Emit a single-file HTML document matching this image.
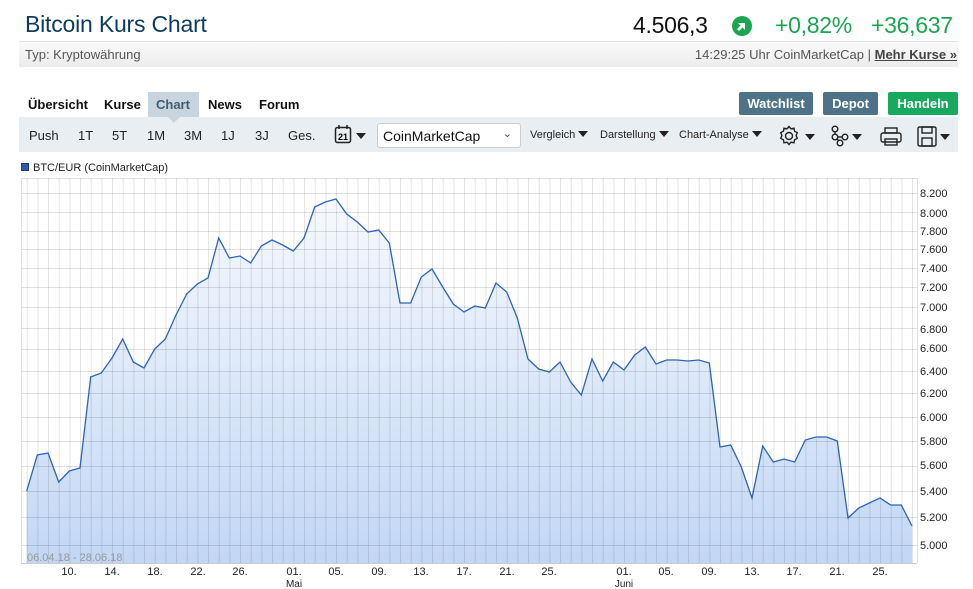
<!DOCTYPE html>
<html><head><meta charset="utf-8">
<style>
*{margin:0;padding:0;box-sizing:border-box}
body{width:973px;height:589px;background:#fff;font-family:"Liberation Sans",sans-serif;position:relative;overflow:hidden}
.a{position:absolute;white-space:nowrap}
.title{left:25px;top:11px;font-size:23px;color:#0d3b5e;letter-spacing:-0.2px}
.bar{left:19px;top:41px;width:939px;height:26px;background:linear-gradient(#fafafa,#ececec);border-top:1px solid #e2e2e2}
.typ{left:25px;top:47px;font-size:13px;color:#555}
.time{right:16px;top:47px;font-size:13px;color:#555}
.time b{color:#444;text-decoration:underline}
.price{left:633px;top:12px;font-size:23px;color:#111;letter-spacing:-0.3px}
.green{color:#1ba550;font-size:23px;top:12px;letter-spacing:-0.3px}
.tab{top:97px;font-size:13px;font-weight:bold;color:#111}
.ctab{left:148px;top:92px;width:51px;height:25px;background:#c9d5de}
.btn{top:92px;height:23px;border-radius:2px;color:#fff;font-size:13px;font-weight:bold;text-align:center;line-height:23px}
.tool{left:19px;top:117px;width:939px;height:35px;background:#e9eef2}
.t{top:128px;font-size:13px;color:#222}
.s{top:129px;font-size:11px;color:#222}
.sel{left:377px;top:123px;width:144px;height:25px;background:#fff;border:1px solid #ccc;border-radius:3px;font-size:14px;padding:4px 5px;color:#111}
.tri{display:inline-block;width:0;height:0;border-left:5px solid transparent;border-right:5px solid transparent;border-top:6px solid #222;margin-left:3px;vertical-align:1px}
.lab{font-size:11px;color:#222;font-family:"Liberation Sans",Arial,sans-serif}
</style></head><body>
<div class="a title">Bitcoin Kurs Chart</div>
<div class="a price">4.506,3</div>
<svg class="a" style="left:731px;top:15px" width="22" height="22" viewBox="0 0 22 22"><circle cx="11" cy="11" r="10" fill="#1ba550"/><path d="M7 8h7v7l-2.5-2.5L8 16 6 14l3.5-3.5z" fill="#fff"/></svg>
<div class="a green" style="left:775px">+0,82%</div>
<div class="a green" style="left:871px">+36,637</div>
<div class="a bar"></div>
<div class="a typ">Typ: Kryptowährung</div>
<div class="a time">14:29:25 Uhr CoinMarketCap | <b>Mehr Kurse »</b></div>

<div class="a ctab"></div>
<div class="a" style="left:168px;top:117px;width:0;height:0;border-left:6px solid transparent;border-right:6px solid transparent;border-top:6px solid #c9d5de;z-index:2"></div>
<div class="a tab" style="left:28px">Übersicht</div>
<div class="a tab" style="left:104px">Kurse</div>
<div class="a tab" style="left:156px;color:#3e5d72">Chart</div>
<div class="a tab" style="left:208px">News</div>
<div class="a tab" style="left:259px">Forum</div>
<div class="a btn" style="left:739px;width:74px;background:#4e7389">Watchlist</div>
<div class="a btn" style="left:823px;width:55px;background:#4e7389">Depot</div>
<div class="a btn" style="left:888px;width:70px;background:#17aa5e">Handeln</div>

<div class="a tool"></div>
<div class="a t" style="left:29px">Push</div>
<div class="a t" style="left:78px">1T</div>
<div class="a t" style="left:112px">5T</div>
<div class="a t" style="left:147px">1M</div>
<div class="a t" style="left:184px">3M</div>
<div class="a t" style="left:221px">1J</div>
<div class="a t" style="left:255px">3J</div>
<div class="a t" style="left:288px">Ges.</div>
<svg class="a" style="left:334px;top:124px" width="36" height="22"><rect x="1.5" y="3.5" width="15" height="15" rx="2" fill="none" stroke="#222" stroke-width="1.5"/><line x1="5" y1="1" x2="5" y2="5" stroke="#222" stroke-width="1.5"/><line x1="13" y1="1" x2="13" y2="5" stroke="#222" stroke-width="1.5"/><text x="9" y="16" font-size="9" font-weight="bold" text-anchor="middle" font-family="Liberation Sans">21</text><path d="M22 9h10l-5 6z" fill="#222"/></svg>
<div class="a sel">CoinMarketCap<span style="position:absolute;right:8px;top:3px;font-size:11px;color:#444">&#8964;</span></div>
<div class="a s" style="left:530px">Vergleich<span class="tri"></span></div>
<div class="a s" style="left:600px">Darstellung<span class="tri"></span></div>
<div class="a s" style="left:679px">Chart-Analyse<span class="tri"></span></div>
<svg class="a" style="left:777px;top:124px" width="180" height="24" fill="none" stroke="#222" stroke-width="1.4">
<circle cx="12" cy="12" r="3.5"/><path d="M12 2.5l2 2.3 3-.6.6 3 2.7 1.5-1.2 2.8 1.2 2.8-2.7 1.5-.6 3-3-.6-2 2.3-2-2.3-3 .6-.6-3-2.7-1.5 1.2-2.8-1.2-2.8 2.7-1.5.6-3 3 .6z"/>
<path d="M28 10h10l-5 6z" fill="#222" stroke="none"/>
<circle cx="58" cy="5" r="2.8"/><circle cx="58" cy="13" r="2.8"/><circle cx="63" cy="19" r="2.8"/><circle cx="68" cy="13" r="2.8"/><path d="M58 8v2M60 15l2 2M61 13h4"/>
<path d="M75 10h10l-5 6z" fill="#222" stroke="none"/>
<rect x="104" y="9" width="20" height="9" rx="2"/><rect x="108" y="4" width="12" height="5"/><rect x="108" y="15" width="12" height="6"/>
<rect x="141" y="3" width="18" height="19" rx="1.5"/><rect x="145" y="3" width="10" height="6"/><rect x="145" y="14" width="10" height="8"/>
<path d="M163 10h10l-5 6z" fill="#222" stroke="none"/>
</svg>

<div class="a lab" style="left:21px;top:162px"><span style="display:inline-block;width:8px;height:8px;background:#2c5aa5;border:1px solid #1d3f7a;margin-right:4px"></span>BTC/EUR (CoinMarketCap)</div>

<svg class="a" style="left:0;top:0" width="973" height="589">
<defs>
<linearGradient id="g" x1="0" y1="0" x2="0" y2="1"><stop offset="0" stop-color="#f6f9fe"/><stop offset="1" stop-color="#c2d7f5"/></linearGradient>
<pattern id="vp" x="26.7" y="0" width="10.667" height="600" patternUnits="userSpaceOnUse"><rect x="0" y="0" width="1" height="600" fill="rgba(0,0,0,0.11)"/></pattern>
</defs>
<polygon fill="url(#g)" points="26.7,563 26.7,491 37.3,455 48,453 58.7,482 69.3,471 80,468 90.7,377 101.3,373 112,358 122.7,339 133.3,362 144,368 154.7,349 165.3,339 176,315 186.7,294 197.3,284 208,278 218.7,238 229.3,258 240,256 250.7,263 261.3,246 272,240 282.7,245 293.3,251 304,238 314.7,207 325.3,202 336,199 346.7,214 357.3,222 368,232 378.7,230 389.3,243 400,303 410.7,303 421.3,277 432,269 442.7,287 453.3,304 464,312 474.7,306 485.3,308 496,283 506.7,292 517.3,318 528,359 538.7,369 549.3,372 560,362 570.7,382 581.3,395 592,359 602.7,381 613.3,362 624,370 634.7,355 645.3,347 656,364 666.7,360 677.3,360 688,361 698.7,360 709.3,363 720,447 730.7,445 741.3,467 752,498 762.7,446 773.3,462 784,459 794.7,462 805.3,440 816,437 826.7,437 837.3,441 848,518 858.7,508 869.3,503 880,498 890.7,505 901.3,505 912,526 912,563"/>
<rect x="26" y="178" width="891" height="385" fill="url(#vp)"/>
<g stroke="rgba(0,0,0,0.12)" stroke-width="1">
<path d="M21 178.5H917M21 193.5H917M21 212.5H917M21 231.5H917M21 249.5H917M21 268.5H917M21 287.5H917M21 307.5H917M21 328.5H917M21 349.5H917M21 371.5H917M21 393.5H917M21 417.5H917M21 441.5H917M21 466.5H917M21 491.5H917M21 517.5H917M21 545.5H917M21.5 178V563M917.5 178V563"/>
</g>
<line x1="21" y1="563.5" x2="917" y2="563.5" stroke="#ccc"/>
<polyline fill="none" stroke="#2d63b8" stroke-width="1.3" points="26.7,491 37.3,455 48,453 58.7,482 69.3,471 80,468 90.7,377 101.3,373 112,358 122.7,339 133.3,362 144,368 154.7,349 165.3,339 176,315 186.7,294 197.3,284 208,278 218.7,238 229.3,258 240,256 250.7,263 261.3,246 272,240 282.7,245 293.3,251 304,238 314.7,207 325.3,202 336,199 346.7,214 357.3,222 368,232 378.7,230 389.3,243 400,303 410.7,303 421.3,277 432,269 442.7,287 453.3,304 464,312 474.7,306 485.3,308 496,283 506.7,292 517.3,318 528,359 538.7,369 549.3,372 560,362 570.7,382 581.3,395 592,359 602.7,381 613.3,362 624,370 634.7,355 645.3,347 656,364 666.7,360 677.3,360 688,361 698.7,360 709.3,363 720,447 730.7,445 741.3,467 752,498 762.7,446 773.3,462 784,459 794.7,462 805.3,440 816,437 826.7,437 837.3,441 848,518 858.7,508 869.3,503 880,498 890.7,505 901.3,505 912,526"/>
<g font-family="Liberation Sans, Arial, sans-serif" font-size="11" fill="#222">
<text x="920" y="197">8.200</text><text x="920" y="217">8.000</text><text x="920" y="235">7.800</text><text x="920" y="253">7.600</text><text x="920" y="272">7.400</text><text x="920" y="291">7.200</text><text x="920" y="311">7.000</text><text x="920" y="333">6.800</text><text x="920" y="352">6.600</text><text x="920" y="375">6.400</text><text x="920" y="397">6.200</text><text x="920" y="421">6.000</text><text x="920" y="445">5.800</text><text x="920" y="469">5.600</text><text x="920" y="495">5.400</text><text x="920" y="521">5.200</text><text x="920" y="549">5.000</text>
<g text-anchor="middle">
<text x="69" y="575">10.</text><text x="112" y="575">14.</text><text x="155" y="575">18.</text><text x="198" y="575">22.</text><text x="240" y="575">26.</text><text x="294" y="575">01.</text><text x="336" y="575">05.</text><text x="379" y="575">09.</text><text x="421" y="575">13.</text><text x="464" y="575">17.</text><text x="507" y="575">21.</text><text x="549" y="575">25.</text><text x="624" y="575">01.</text><text x="666" y="575">05.</text><text x="709" y="575">09.</text><text x="752" y="575">13.</text><text x="794" y="575">17.</text><text x="837" y="575">21.</text><text x="880" y="575">25.</text>
<text x="294" y="587" font-size="10">Mai</text><text x="624" y="587" font-size="10">Juni</text>
</g>
<text x="27" y="561" fill="#999">06.04.18 - 28.06.18</text>
</g>
</svg>
</body></html>
